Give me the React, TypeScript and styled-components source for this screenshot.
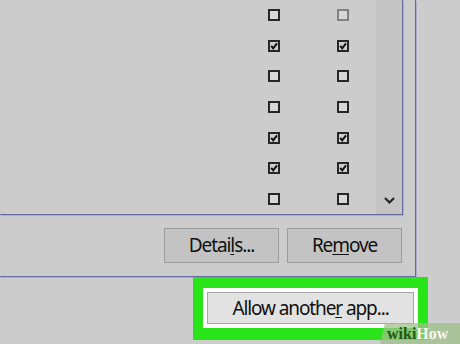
import React from "react";
import styled, { createGlobalStyle } from "styled-components";

const Global = createGlobalStyle`
  html, body { margin: 0; padding: 0; background: #cccccc; }
  #root { width: 460px; height: 344px; }
`;

const Page = styled.div`
  position: relative;
  width: 460px;
  height: 344px;
  overflow: hidden;
  background: #cccccc;
  font-family: "Noto Sans", "Open Sans", sans-serif;
`;

const GroupBox = styled.div`
  box-sizing: border-box;
  width: 416px;
  height: 277px;
  border-right: 1px solid #6a68a0;
  border-bottom: 1px solid #6a68a0;
  box-shadow: 1px 1px 0 #aeaccc;
  display: flex;
  flex-direction: column;
`;

const ListBox = styled.div`
  box-sizing: border-box;
  width: 403px;
  height: 215px;
  border-right: 1px solid #6a68a0;
  border-bottom: 1px solid #6a68a0;
  box-shadow: 1px 1px 0 #aeaccc;
  display: flex;
`;

const Rows = styled.div`
  flex: 1;
  display: grid;
  grid-template-columns: 12px 12px;
  grid-auto-rows: 30.67px;
  column-gap: 57px;
  padding-left: 268px;
  padding-top: 9px;
  align-content: start;
`;

const Scrollbar = styled.div`
  width: 26px;
  background: #c4c4c4;
  display: flex;
  flex-direction: column;
  justify-content: flex-end;
  align-items: center;
  padding-bottom: 10px;
  box-sizing: border-box;
`;

const ButtonRow = styled.div`
  display: flex;
  justify-content: flex-end;
  gap: 8px;
  margin-top: 13px;
  padding-right: 13px;
`;

const Button = styled.div<{ $light?: boolean }>`
  box-sizing: border-box;
  width: ${(p) => (p.$light ? "207px" : "115px")};
  height: ${(p) => (p.$light ? "32px" : "35px")};
  background: ${(p) => (p.$light ? "#e2e2e2" : "#c3c3c3")};
  border: 1px solid ${(p) => (p.$light ? "#a6a6a6" : "#9c9c9c")};
  display: flex;
  align-items: center;
  justify-content: center;
  font-size: 19px;
  letter-spacing: -1.1px;
  color: #111111;
  padding-bottom: 1px;
  u { text-decoration-thickness: 1px; text-underline-offset: 2px; }
`;

const Label = styled.span`
  white-space: pre;
`;

const HighlightRow = styled.div`
  padding-left: 193px;
`;

const Highlight = styled.div`
  box-sizing: border-box;
  width: 235px;
  height: 63px;
  background: #2ae41a;
  padding: 11px 10px 12px 10px;
`;

const FocusRing = styled.div`
  box-sizing: border-box;
  height: 40px;
  background: #ffffff;
  padding: 4px;
`;

const Watermark = styled.div`
  position: absolute;
  right: 0;
  bottom: 0;
  width: 80px;
  height: 21px;
  background: rgba(160, 192, 138, 0.75);
  clip-path: polygon(5px 0, 100% 0, 100% 100%, 0 100%);
  display: flex;
  align-items: center;
  padding-left: 7px;
  box-sizing: border-box;
  font-family: "Liberation Serif", "DejaVu Serif", serif;
  font-weight: bold;
  font-size: 16px;
  line-height: 1;
`;

const Wiki = styled.span`
  color: #255516;
`;

const How = styled.span`
  color: #f4f8f0;
`;

const Box = ({ checked, dim }: { checked?: boolean; dim?: boolean }) => (
  <svg width="12" height="12" viewBox="0 0 12 12">
    <rect
      x="1"
      y="1"
      width="10"
      height="10"
      fill={checked ? "#cfcfcf" : "#d8d8d8"}
      stroke={dim ? "#808080" : "#262626"}
      strokeWidth="2"
    />
    {checked && (
      <path d="M3.2 5.8 L5.2 8.3 L9 3.4" fill="none" stroke="#111111" strokeWidth="2" />
    )}
  </svg>
);

const Chevron = () => (
  <svg width="11" height="7" viewBox="0 0 11 7">
    <path d="M1 1 L5.5 5.5 L10 1" fill="none" stroke="#262626" strokeWidth="2.2" />
  </svg>
);

const rows: [boolean, boolean, boolean?][] = [
  [false, false, true],
  [true, true],
  [false, false],
  [false, false],
  [true, true],
  [true, true],
  [false, false],
];

export default function App() {
  return (
    <Page>
      <Global />
      <GroupBox>
        <ListBox>
          <Rows>
            {rows.map(([a, b, dim], i) => (
              <React.Fragment key={i}>
                <Box checked={a} />
                <Box checked={b} dim={dim} />
              </React.Fragment>
            ))}
          </Rows>
          <Scrollbar>
            <Chevron />
          </Scrollbar>
        </ListBox>
        <ButtonRow>
          <Button>
            <Label>
              Detai<u>l</u>s...
            </Label>
          </Button>
          <Button>
            <Label>
              Re<u>m</u>ove
            </Label>
          </Button>
        </ButtonRow>
      </GroupBox>
      <HighlightRow>
        <Highlight>
          <FocusRing>
            <Button $light>
              <Label>
                Allow anothe<u>r</u> app...
              </Label>
            </Button>
          </FocusRing>
        </Highlight>
      </HighlightRow>
      <Watermark>
        <Wiki>wiki</Wiki>
        <How>How</How>
      </Watermark>
    </Page>
  );
}
